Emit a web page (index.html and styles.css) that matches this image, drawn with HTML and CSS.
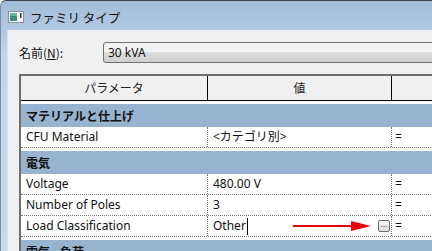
FILE: index.html
```html
<!DOCTYPE html>
<html lang="ja">
<head>
  <meta charset="UTF-8">
  <title>ファミリ タイプ</title>
  <link rel="stylesheet" href="styles.css">
</head>
<body>
  <div class="window">
    <div class="titlebar">
      <svg class="app-icon" width="16" height="12" viewBox="0 0 16 12">
        <rect x="0.5" y="0.5" width="15" height="11" fill="#f4f6f8" stroke="#8a9099"/>
        <rect x="2" y="2" width="7" height="8" fill="#3e8a7c"/>
        <rect x="2" y="2" width="7" height="3" fill="#6fb0a6"/>
        <rect x="12" y="2" width="1.5" height="5" fill="#333"/>
      </svg>
      <span class="title">ファミリ タイプ</span>
    </div>

    <div class="client">
      <div class="name-row">
        <label class="name-label">名前(<u>N</u>):</label>
        <div class="combo">30 kVA</div>
      </div>

      <div class="grid">
        <div class="head">
          <div class="cell">パラメータ</div>
          <div class="cell">値</div>
          <div class="cell"></div>
        </div>

        <div class="group"><span>マテリアルと仕上げ</span></div>
        <div class="row">
          <div class="cell">CFU Material</div>
          <div class="cell">&lt;カテゴリ別&gt;</div>
          <div class="cell">=</div>
        </div>

        <div class="group"><span>電気</span></div>
        <div class="row">
          <div class="cell">Voltage</div>
          <div class="cell">480.00 V</div>
          <div class="cell">=</div>
        </div>
        <div class="row">
          <div class="cell">Number of Poles</div>
          <div class="cell">3</div>
          <div class="cell">=</div>
        </div>
        <div class="row">
          <div class="cell">Load Classification</div>
          <div class="cell editing">
            <span>Other</span><span class="caret"></span>
            <span class="browse">...</span>
          </div>
          <div class="cell">=</div>
        </div>

        <div class="group"><span>電気 - 負荷</span></div>
      </div>

      <!-- annotation arrow pointing at the browse button -->
      <svg class="arrow" width="80" height="12" viewBox="0 0 80 12">
        <rect x="0" y="5" width="62" height="2" fill="#e8000b"/>
        <polygon points="58,1 78,6 58,11" fill="#e8000b"/>
      </svg>
    </div>
  </div>
</body>
</html>
```

FILE: styles.css
```css
body {
  margin: 0;
  width: 432px;
  height: 251px;
  overflow: hidden;
  background: #ffffff;
  font-family: "Noto Sans", "Noto Sans CJK JP", sans-serif;
  font-size: 12px;
  color: #111;
}
.window {
  width: 432px;
  height: 251px;
  overflow: hidden;
  background: linear-gradient(#a2bcd9, #c2d7ed 60px, #c6daef);
  border-top: 1px solid #3d4550;
  border-left: 1px solid #7d8ea3;
  border-top-left-radius: 6px;
  box-sizing: border-box;
}
.titlebar {
  height: 29px;
  display: flex;
  align-items: center;
  padding-left: 7px;
  padding-top: 3px;
  box-sizing: border-box;
  gap: 6px;
}
.title {
  font-family: "Noto Sans CJK JP", sans-serif;
  font-size: 12.5px;
  color: #111;
}
.client {
  position: relative;
  margin-left: 6px;
  height: 240px;
  background: #f0f0f0;
  border-left: 1px solid #d6e2ee;
  overflow: hidden;
}
.name-row {
  display: flex;
  align-items: center;
  padding: 12px 0 0 11px;
}
.name-label {
  width: 84px;
  flex: none;
  font-family: "Noto Sans CJK JP", sans-serif;
}
.combo {
  width: 360px;
  flex: none;
  height: 21px;
  box-sizing: border-box;
  padding-left: 4px;
  line-height: 19px;
  border: 1px solid #707070;
  border-radius: 3px;
  background: linear-gradient(#f2f2f2 50%, #dddddd 50%, #cfcfcf);
  font-family: "Noto Sans", sans-serif;
}
.grid {
  width: 460px;
  margin: 11px 0 0 11px;
  border-top: 2px solid #6e6e6e;
  border-left: 2px solid #6e6e6e;
  background: #ffffff;
}
.head, .row {
  display: grid;
  grid-template-columns: 187px 184px 1fr;
}
.head {
  height: 25px;
  background: #f0f0f0;
  border-bottom: 1px solid #000;
  box-sizing: border-box;
}
.head .cell {
  border-right: 1px solid #000;
  text-align: center;
  line-height: 24px;
  font-family: "Noto Sans CJK JP", sans-serif;
  color: #222;
}
.group {
  padding-top: 3px;
  background: #fff;
}
.group span {
  display: block;
  height: 23px;
  line-height: 23px;
  padding-left: 5px;
  background: #98b3d0;
  font-family: "Noto Sans CJK JP", sans-serif;
  font-weight: bold;
}
.row {
  height: 21px;
  border-bottom: 1px dotted #777;
  box-sizing: border-box;
}
.row .cell {
  border-right: 1px dotted #777;
  line-height: 20px;
  padding-left: 5px;
  white-space: nowrap;
  overflow: hidden;
}
.row .cell:last-child {
  padding-left: 3px;
}
.editing {
  display: flex;
  align-items: center;
  padding-right: 1px;
}
.caret {
  width: 1px;
  height: 17px;
  margin-left: 1px;
  background: #000;
}
.browse {
  margin-left: auto;
  width: 12px;
  height: 12px;
  box-sizing: border-box;
  border: 1px solid #6d6d6d;
  border-radius: 2px;
  background: linear-gradient(#fafafa, #dedede);
  font-size: 8px;
  line-height: 6px;
  text-align: center;
  color: #333;
}
.arrow {
  position: absolute;
  left: 285px;
  top: 190px;
}
```
